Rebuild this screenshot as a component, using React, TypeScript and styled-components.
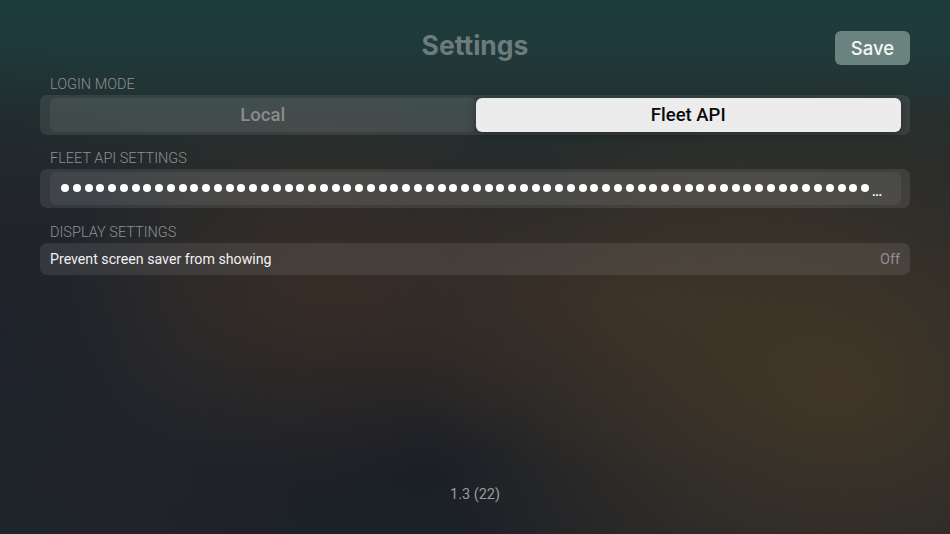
import React from "react";
import styled, { createGlobalStyle } from "styled-components";

const Global = createGlobalStyle`
  html, body { margin: 0; padding: 0; background: #1e2227; }
  body { font-family: Roboto, "Noto Sans", "Liberation Sans", sans-serif; }
  * { box-sizing: border-box; }
`;

const Page = styled.div`
  width: 950px;
  height: 534px;
  overflow: hidden;
  display: flex;
  flex-direction: column;
  padding: 31px 40px 30px;
  background:
    radial-gradient(ellipse 260px 200px at 330px 290px, rgba(72, 50, 35, 0.55), rgba(72, 50, 35, 0) 100%),
    radial-gradient(ellipse 420px 320px at 840px 390px, rgba(72, 58, 38, 0.8), rgba(72, 58, 38, 0) 100%),
    radial-gradient(ellipse 300px 180px at 640px 300px, rgba(68, 52, 38, 0.6), rgba(68, 52, 38, 0) 100%),
    radial-gradient(ellipse 300px 200px at 420px 470px, rgba(24, 28, 36, 0.7), rgba(24, 28, 36, 0) 100%),
    radial-gradient(ellipse 200px 300px at 0px 330px, rgba(28, 32, 42, 0.6), rgba(28, 32, 42, 0) 100%),
    linear-gradient(180deg, #1e3c3c 0%, #20393a 10%, #233030 20%, #24292b 34%, #24272b 55%, #20242a 100%);
`;

const Header = styled.header`
  display: grid;
  grid-template-columns: 1fr auto 1fr;
  align-items: center;
  height: 34px;
`;

const Title = styled.h1`
  grid-column: 2;
  margin: -6px 0 0;
  font-family: Inter, "Noto Sans", sans-serif;
  font-size: 26.5px;
  font-weight: 700;
  color: #6c7b7b;
`;

const SaveButton = styled.button`
  grid-column: 3;
  justify-self: end;
  width: 75px;
  height: 34px;
  border: none;
  border-radius: 6px;
  background: #6a837f;
  color: #f4f6f5;
  font-family: Inter, "Noto Sans", sans-serif;
  font-size: 18.5px;
  font-weight: 500;
  padding: 0;
`;

const SectionLabel = styled.div<{ $top: number }>`
  margin-top: ${(p) => p.$top}px;
  padding-left: 10px;
  height: 18px;
  line-height: 18px;
  font-size: 14.5px;
  font-weight: 300;
  color: #8e9092;
  text-transform: uppercase;
  margin-bottom: 1px;
`;

const Panel = styled.div`
  background: rgba(255, 255, 255, 0.09);
  border-radius: 7px;
  padding: 3px 9px 3px 10px;
`;

const Segmented = styled(Panel)`
  display: grid;
  grid-template-columns: 1fr 1fr;
  height: 40px;
`;

const Segment = styled.div<{ $active?: boolean }>`
  display: flex;
  align-items: center;
  justify-content: center;
  border-radius: 6px;
  font-size: 18.5px;
  font-weight: 500;
  background: ${(p) => (p.$active ? "#ececec" : "rgba(255,255,255,0.06)")};
  color: ${(p) => (p.$active ? "#0b0b0b" : "#8b8c8e")};
  box-shadow: ${(p) => (p.$active ? "0 2px 8px rgba(0,0,0,0.35)" : "none")};
`;

const Field = styled(Panel)`
  height: 39px;
  display: flex;
`;

const FieldInner = styled.div`
  flex: 1;
  display: flex;
  align-items: center;
  border-radius: 6px;
  background: rgba(255, 255, 255, 0.06);
  padding: 0 0 2px 11px;
  overflow: hidden;
`;

const Dots = styled.div`
  display: flex;
  gap: 3.77px;
`;

const Dot = styled.span`
  width: 8px;
  height: 8px;
  border-radius: 50%;
  background: #ffffff;
  flex: none;
`;

const Ellipsis = styled.span`
  margin-left: 3px;
  margin-top: 7px;
  color: #fff;
  font-size: 13px;
  letter-spacing: -0.5px;
  font-weight: 700;
  line-height: 1;
`;

const Row = styled.div`
  height: 32px;
  display: flex;
  align-items: center;
  justify-content: space-between;
  padding: 0 10px;
  border-radius: 7px;
  background: rgba(255, 255, 255, 0.09);
`;

const RowLabel = styled.span`
  font-size: 14.2px;
  color: #f1f1f1;
  font-weight: 400;
`;

const RowValue = styled.span`
  font-size: 14.5px;
  color: #8f9091;
`;

const Version = styled.div`
  margin-top: auto;
  text-align: center;
  font-size: 14.5px;
  line-height: 18px;
  color: #9a9c9e;
`;

export default function App() {
  const dots = Array.from({ length: 69 });
  return (
    <>
      <Global />
      <Page>
        <Header>
          <Title>Settings</Title>
          <SaveButton>Save</SaveButton>
        </Header>

        <SectionLabel $top={11}>Login Mode</SectionLabel>
        <Segmented>
          <Segment>Local</Segment>
          <Segment $active>Fleet API</Segment>
        </Segmented>

        <SectionLabel $top={15}>Fleet API Settings</SectionLabel>
        <Field>
          <FieldInner>
            <Dots>
              {dots.map((_, i) => (
                <Dot key={i} />
              ))}
            </Dots>
            <Ellipsis>...</Ellipsis>
          </FieldInner>
        </Field>

        <SectionLabel $top={16}>Display Settings</SectionLabel>
        <Row>
          <RowLabel>Prevent screen saver from showing</RowLabel>
          <RowValue>Off</RowValue>
        </Row>

        <Version>1.3 (22)</Version>
      </Page>
    </>
  );
}
